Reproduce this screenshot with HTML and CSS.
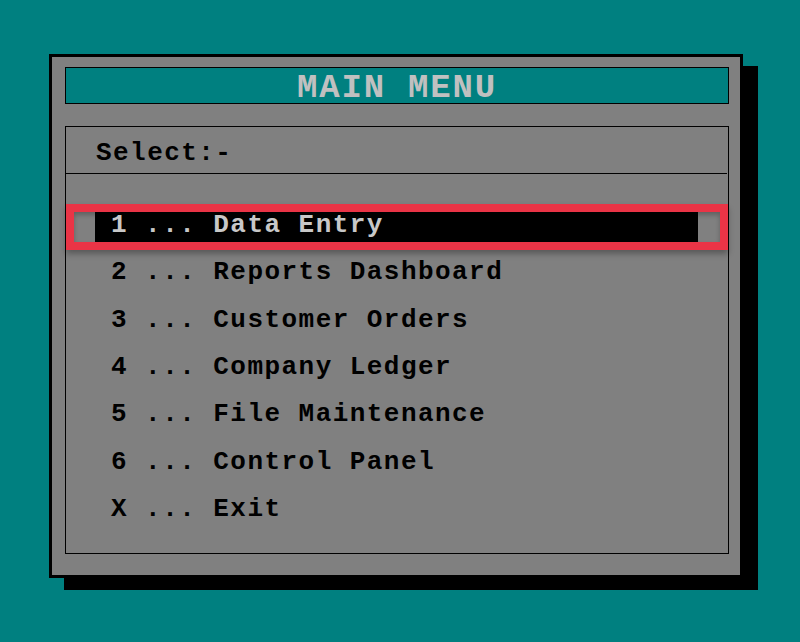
FILE: index.html
```html
<!DOCTYPE html>
<html>
<head>
<meta charset="utf-8">
<title>Main Menu</title>
<link rel="stylesheet" href="styles.css">
</head>
<body>
<div class="window">
  <div class="title">MAIN MENU</div>
  <div class="panel">
    <div class="prompt">Select:-</div>
    <div class="menu">
      <div class="row sel"><span class="gut"></span><span class="bar">1 ... Data Entry</span><span class="gut-r"></span></div>
      <div class="row"><span class="gut"></span><span class="bar">2 ... Reports Dashboard</span><span class="gut-r"></span></div>
      <div class="row"><span class="gut"></span><span class="bar">3 ... Customer Orders</span><span class="gut-r"></span></div>
      <div class="row"><span class="gut"></span><span class="bar">4 ... Company Ledger</span><span class="gut-r"></span></div>
      <div class="row"><span class="gut"></span><span class="bar">5 ... File Maintenance</span><span class="gut-r"></span></div>
      <div class="row"><span class="gut"></span><span class="bar">6 ... Control Panel</span><span class="gut-r"></span></div>
      <div class="row"><span class="gut"></span><span class="bar">X ... Exit</span><span class="gut-r"></span></div>
    </div>
  </div>
</div>
</body>
</html>
```
FILE: styles.css
```css
html, body {
  margin: 0;
  height: 642px;
  overflow: hidden;
}
body {
  background: #008080;
  padding: 54px 0 0 49px;
  box-sizing: border-box;
  font-family: "Courier New", "Nimbus Mono PS", "FreeMono", "Liberation Mono", monospace;
  font-weight: bold;
}
.window {
  width: 694px;
  height: 524px;
  box-sizing: border-box;
  border: 3px solid #000;
  background: #808080;
  box-shadow: 15px 12px 0 #000;
  padding: 10px 11px 0 13px;
}
.title {
  height: 37px;
  box-sizing: border-box;
  border: 1px solid #000;
  background: #008080;
  color: #c0c0c0;
  font-size: 34px;
  letter-spacing: 1.8px;
  line-height: 32px;
  padding-top: 4px;
  text-align: center;
  margin-bottom: 22px;
}
.panel {
  height: 428px;
  box-sizing: border-box;
  border: 1px solid #000;
}
.prompt {
  height: 47px;
  box-sizing: border-box;
  border-bottom: 1px solid #000;
  margin-right: 1px;
  padding: 7px 0 0 30px;
  font-size: 26px;
  letter-spacing: 1.45px;
  line-height: 39px;
  color: #000;
}
.menu {
  padding-top: 30px;
}
.row {
  display: flex;
  height: 46px;
  box-sizing: border-box;
  border: 8px solid transparent;
  margin-bottom: 1.33px;
  font-size: 26px;
  letter-spacing: 1.45px;
  line-height: 27px;
  color: #000;
  white-space: pre;
}
.gut {
  width: 21px;
  flex: none;
}
.gut-r {
  width: 22px;
  flex: none;
}
.bar {
  flex: 1;
  padding-left: 16px;
}
.row.sel {
  border-color: #ea3446;
  box-shadow: 0 4px 6px rgba(0, 0, 0, 0.3), inset 0 3px 5px rgba(0, 0, 0, 0.25);
}
.row.sel .bar {
  background: #000;
  color: #c8c8c8;
}
```
